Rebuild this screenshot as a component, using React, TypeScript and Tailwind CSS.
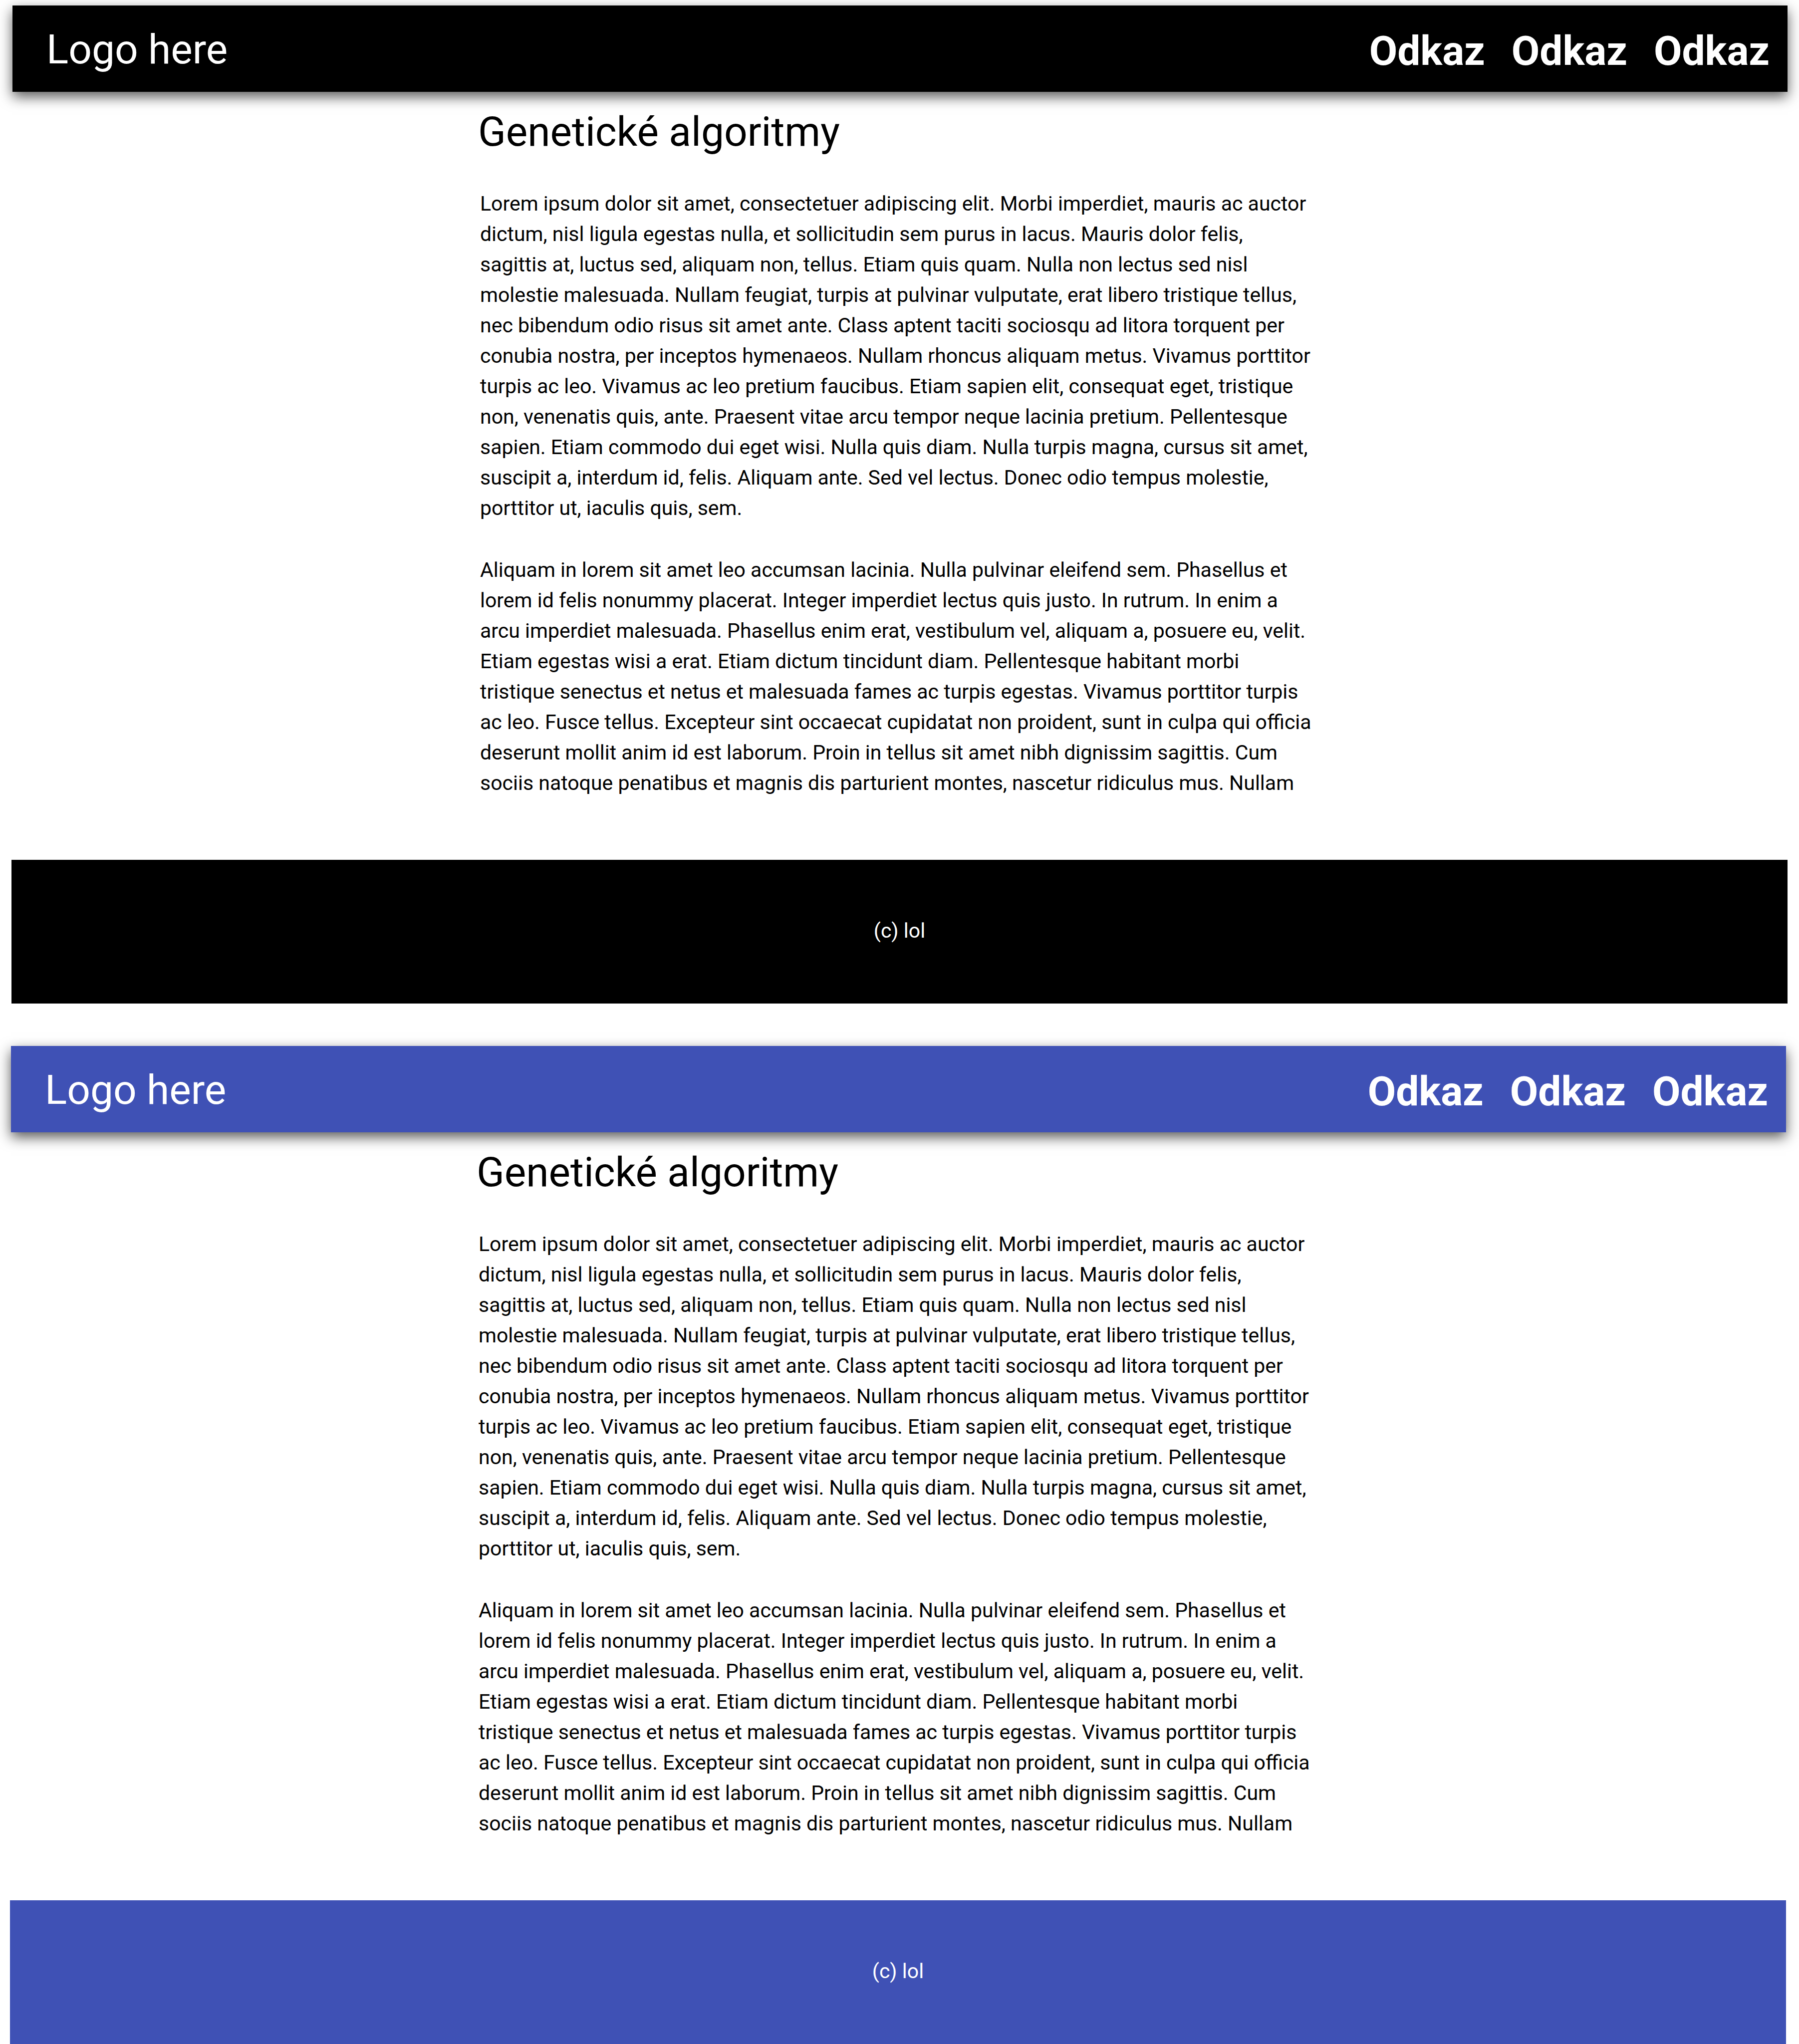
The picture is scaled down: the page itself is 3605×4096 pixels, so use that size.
import React from "react";

const paragraphs = [
  "Lorem ipsum dolor sit amet, consectetuer adipiscing elit. Morbi imperdiet, mauris ac auctor dictum, nisl ligula egestas nulla, et sollicitudin sem purus in lacus. Mauris dolor felis, sagittis at, luctus sed, aliquam non, tellus. Etiam quis quam. Nulla non lectus sed nisl molestie malesuada. Nullam feugiat, turpis at pulvinar vulputate, erat libero tristique tellus, nec bibendum odio risus sit amet ante. Class aptent taciti sociosqu ad litora torquent per conubia nostra, per inceptos hymenaeos. Nullam rhoncus aliquam metus. Vivamus porttitor turpis ac leo. Vivamus ac leo pretium faucibus. Etiam sapien elit, consequat eget, tristique non, venenatis quis, ante. Praesent vitae arcu tempor neque lacinia pretium. Pellentesque sapien. Etiam commodo dui eget wisi. Nulla quis diam. Nulla turpis magna, cursus sit amet, suscipit a, interdum id, felis. Aliquam ante. Sed vel lectus. Donec odio tempus molestie, porttitor ut, iaculis quis, sem.",
  "Aliquam in lorem sit amet leo accumsan lacinia. Nulla pulvinar eleifend sem. Phasellus et lorem id felis nonummy placerat. Integer imperdiet lectus quis justo. In rutrum. In enim a arcu imperdiet malesuada. Phasellus enim erat, vestibulum vel, aliquam a, posuere eu, velit. Etiam egestas wisi a erat. Etiam dictum tincidunt diam. Pellentesque habitant morbi tristique senectus et netus et malesuada fames ac turpis egestas. Vivamus porttitor turpis ac leo. Fusce tellus. Excepteur sint occaecat cupidatat non proident, sunt in culpa qui officia deserunt mollit anim id est laborum. Proin in tellus sit amet nibh dignissim sagittis. Cum sociis natoque penatibus et magnis dis parturient montes, nascetur ridiculus mus. Nullam",
];

const links = ["Odkaz", "Odkaz", "Odkaz"];

function Page({ bar, frame }: { bar: string; frame: string }) {
  return (
    <section className={frame}>
      <header
        className={`${bar} ml-[2px] flex h-[173px] items-center justify-between pr-[36px] pl-[68px] text-[82px] leading-[96px] text-white shadow-[0_10px_25px_rgba(0,0,0,0.65)]`}
      >
        <a href="#" className="pt-[2px]">
          Logo here
        </a>
        <nav className="flex gap-[53px] pt-2 font-bold">
          {links.map((label, i) => (
            <a key={i} href="#">
              {label}
            </a>
          ))}
        </nav>
      </header>
      <main className="mx-auto max-w-[1689px] pt-8 pb-[123px]">
        <h1 className="text-[82px] leading-[96px]">Genetické algoritmy</h1>
        <div className="flex flex-col gap-[63px] pt-[66px] pr-[18px] pl-1 text-[41px] leading-[61px]">
          {paragraphs.map((text, i) => (
            <p key={i}>{text}</p>
          ))}
        </div>
      </main>
      <footer
        className={`${bar} flex h-[288px] items-center justify-center pb-1 text-[41px] leading-[61px] text-white`}
      >
        (c) lol
      </footer>
    </section>
  );
}

export default function App() {
  return (
    <div className="flex flex-col gap-[85px] bg-white pt-[11px] font-[Roboto,sans-serif] text-black">
      <Page bar="bg-black" frame="pr-[23px] pl-[23px]" />
      <Page bar="bg-[#3f51b5]" frame="pr-[26px] pl-[20px]" />
    </div>
  );
}
